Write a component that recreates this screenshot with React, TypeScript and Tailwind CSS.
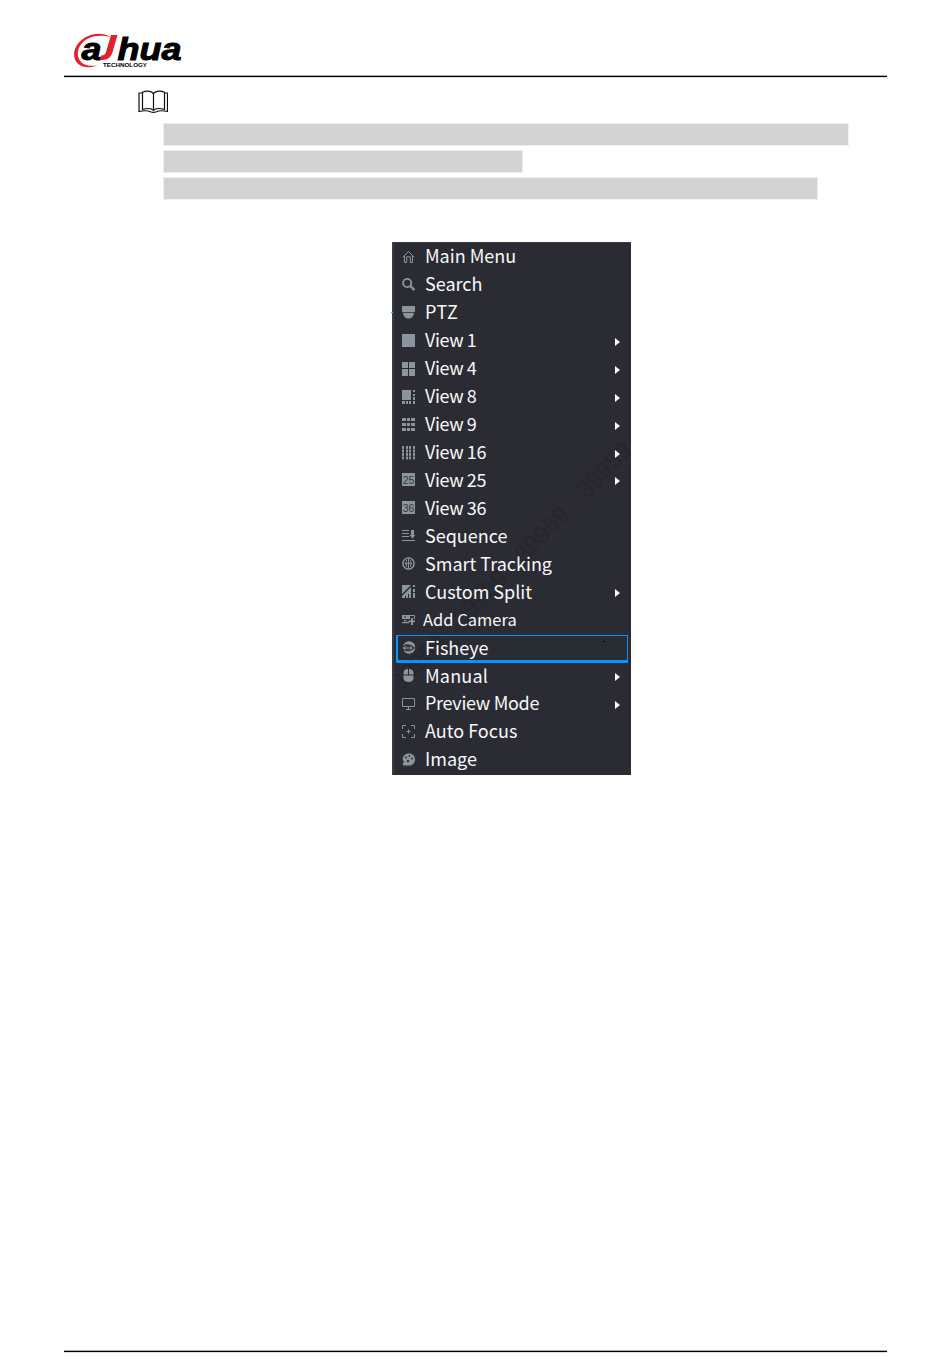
import type { ReactNode } from "react"

interface MenuItem {
  label: string
  icon: ReactNode
  arrow?: boolean
  active?: boolean
  labelClass?: string
}

// cells of a split-view icon, on a 13x13 grid
function Cells({ cells }: { cells: number[][] }) {
  return (
    <>
      {cells.map(([x, y, w, h], i) => (
        <rect key={i} x={x} y={y} width={w} height={h} />
      ))}
    </>
  )
}

const iconText = {
  fontFamily: "Liberation Sans, sans-serif",
  fontSize: 10.5,
  textAnchor: "middle" as const,
  fill: "#34363e",
}

const line = { fill: "none", stroke: "#8b959d" }

const items: MenuItem[] = [
  {
    label: "Main Menu",
    icon: <path {...line} d="M.8 7.2 6.5 1.5l5.700 5.700M2.500 6v6.500h2.200V6.800h3.600v5.700h2.200V6" />,
  },
  {
    label: "Search",
    icon: (
      <g {...line} strokeWidth="1.9">
        <circle cx="5.200" cy="5" r="4.100" />
        <path d="m8.200 7.900 4.200 4.200" strokeWidth="2.400" />
      </g>
    ),
  },
  {
    label: "PTZ",
    labelClass: "tracking-[0.7px]",
    icon: <path d="M0 0h13v5.600l-1 .6H1l-1-.6zM1 7h11c-.4 3.500-2.500 5.500-5.500 5.500S1.400 10.500 1 7z" />,
  },
  { label: "View 1", labelClass: "tracking-[-0.4px]", arrow: true, icon: <Cells cells={[[0, 0, 13, 13]]} /> },
  {
    label: "View 4",
    labelClass: "tracking-[-0.4px]",
    arrow: true,
    icon: <Cells cells={[[0, 0, 6, 6], [7, 0, 6, 6], [0, 7, 6, 7], [7, 7, 6, 7]]} />,
  },
  {
    label: "View 8",
    labelClass: "tracking-[-0.4px]",
    arrow: true,
    icon: (
      <Cells
        cells={[[0, 0, 9, 10], [11, 0, 2, 2], [11, 4, 2, 2], [11, 7, 2, 3], [0, 11, 3, 3], [4, 11, 2, 3], [7, 11, 2, 3], [11, 11, 2, 3]]}
      />
    ),
  },
  {
    label: "View 9",
    labelClass: "tracking-[-0.4px]",
    arrow: true,
    icon: (
      <Cells
        cells={[[0, 0, 4, 3], [5, 0, 3, 3], [9, 0, 4, 3], [0, 5, 4, 3], [5, 5, 3, 3], [9, 5, 4, 3], [0, 10, 4, 3], [5, 10, 3, 3], [9, 10, 4, 3]]}
      />
    ),
  },
  {
    label: "View 16",
    labelClass: "tracking-[-0.4px]",
    arrow: true,
    icon: (
      <Cells
        cells={[0, 4, 7, 11].flatMap((x) => [0, 3.500, 7, 10.500].map((y) => [x, y, 2, 2.900]))}
      />
    ),
  },
  {
    label: "View 25",
    labelClass: "tracking-[-0.4px]",
    arrow: true,
    icon: (
      <>
        <rect width="13" height="13" />
        <text x="6.5" y="10.5" {...iconText}>25</text>
      </>
    ),
  },
  {
    label: "View 36",
    labelClass: "tracking-[-0.4px]",
    icon: (
      <>
        <rect width="13" height="13" />
        <text x="6.5" y="10.5" {...iconText}>36</text>
      </>
    ),
  },
  {
    label: "Sequence",
    icon: <path d="M0 1h7v1H0zM0 4h7v1H0zM0 7h7v1H0zM0 11h13v1H0zM9 1h3v5h1.500L10.500 9.500 7.500 6H9z" />,
  },
  {
    label: "Smart Tracking",
    icon: (
      <g {...line}>
        <circle cx="6.500" cy="6.500" r="5.600" strokeWidth="1.500" />
        <path d="M6.500 2v9M3 6.500h7M4.800 3Q2.500 6.500 4.800 10M8.200 3q2.300 3.500 0 7" />
      </g>
    ),
  },
  {
    label: "Custom Split",
    arrow: true,
    icon: (
      <>
        <path d="M0 0h9L0 9zM0 13v-2L9 2v11H7V9H6v4H4v-2H3v2z" />
        <Cells cells={[[11, 0, 2, 2], [11, 4, 2, 3], [11, 8, 2, 5]]} />
      </>
    ),
  },
  {
    label: "Add Camera",
    labelClass: "-ml-[2px] text-[16.5px]",
    icon: (
      <>
        <path d="M0 2h8v4H0zM0 9h7v1.300H0zM9 5h2v2.500h2v1.700h-2V12H9V9.200H6.500V7.500H9z" />
        <path {...line} d="M8 2.500h4.500V6M2.500 6.500V8H5" />
        <path fill="#2b2b33" d="M2 3.500h2v1H2z" />
      </>
    ),
  },
  {
    label: "Fisheye",
    active: true,
    icon: (
      <>
        <circle cx="7" cy="6.500" r="6.200" />
        <path d="M-.5 7Q5.500 1 12 7 5.500 12.500-.5 7z" fill="#8b959d" stroke="#2b2b33" strokeWidth="1.200" />
        <circle cx="5.800" cy="7" r="1.600" fill="#8b959d" stroke="#2b2b33" strokeWidth="1.100" />
      </>
    ),
  },
  {
    label: "Manual",
    labelClass: "tracking-[0.2px]",
    arrow: true,
    icon: <path d="M6 0v5.500H1.500V4C1.500 1.500 3.500 0 6 0zM7 0c2.500 0 4.500 1.500 4.500 4v1.500H7zM1.500 6.500h10V9c0 2.500-2 4-5 4s-5-1.500-5-4z" />,
  },
  {
    label: "Preview Mode",
    labelClass: "tracking-[-0.3px]",
    arrow: true,
    icon: <path {...line} d="M.5 1.500h12v8H.5zM4 12.500h5M6.500 9.500v3" />,
  },
  {
    label: "Auto Focus",
    icon: <path {...line} d="M.5 4V.5H4M9 .5h3.500V4M.5 9v3.500H4M9 12.500h3.500V9M6.500 4.500v4M4.500 6.500h4" />,
  },
  {
    label: "Image",
    icon: (
      <>
        <path d="M7 .5c3.500 0 6 2.500 6 6s-2.500 6-5.500 6H1.500C0 11.500.5 9 3 9 1 8.500.5 7 .8 5 1.200 2.500 4 .5 7 .5z" />
        <g fill="#2b2b33">
          <circle cx="4" cy="4.500" r="1" />
          <circle cx="7.500" cy="3" r=".9" />
          <circle cx="10" cy="5.500" r=".9" />
          <circle cx="6" cy="8" r="1.200" />
        </g>
      </>
    ),
  },
]

function Logo() {
  return (
    <svg width="112" height="40" viewBox="0 0 112 40" className="block">
      <path
        d="M37 5C31 .5 20 .5 12 5.500 4 10.500.5 17.500 1.200 24 2.200 33.500 13 38.500 25 33c-9 2.500-18.500-.5-20-9C4 17.500 7.500 11 14 7 21 3 30 3 37 5z"
        fill="#e2222b"
      />
      <g fontFamily="Liberation Sans, sans-serif" fontStyle="italic" fontWeight="700" fill="#000" stroke="#000" strokeWidth="1">
        <text x="8.500" y="27.500" fontSize="32" textLength="20" lengthAdjust="spacingAndGlyphs">a</text>
        <text x="44.500" y="27.500" fontSize="32" textLength="64" lengthAdjust="spacingAndGlyphs">hua</text>
      </g>
      <path d="M38 3h6.500l-5 17.500Q37 28 29.500 28H27l1.300-4.500q3.700 0 4.700-3.500z" fill="#e2222b" />
      <text x="30" y="35" fontSize="6" fontFamily="Liberation Sans, sans-serif" fontWeight="700" textLength="44" lengthAdjust="spacingAndGlyphs">
        TECHNOLOGY
      </text>
    </svg>
  )
}

function BookIcon() {
  return (
    <svg width="30" height="24" viewBox="0 0 30 24" fill="none" stroke="#111" strokeWidth="1.2" className="block">
      <path d="M15.500 3.500C13 .5 8 .5 4.500 2.200v17.300c4-1.400 9-1.400 11 .8 2-2.200 7-2.200 11-.8V2.200C23 .5 18 .5 15.500 3.500z" />
      <path d="M15.500 3.500v17M4.500 3H1v18.500c5-1 9-1 11.500.2q3 1.200 6 0C21 20.500 25 20.500 29.500 21.500V3h-3" />
    </svg>
  )
}

function MenuRow({ item }: { item: MenuItem }) {
  return (
    <li className="relative flex h-[27.94px] items-center pl-[10px] pr-[11px]">
      {item.active && (
        <div className="absolute top-[1px] right-[3px] bottom-[-1px] left-[4px] border-t border-r border-b-3 border-l-2 border-[#0098ff]" />
      )}
      <svg width="13" height="14" viewBox="0 0 13 14" fill="#8b959d" className="shrink-0">
        {item.icon}
      </svg>
      <div className="mb-[3px] ml-[10px] flex-1 leading-[24px] whitespace-nowrap">
        <span className={item.labelClass}>{item.label}</span>
      </div>
      {item.arrow && (
        <svg width="5" height="8" viewBox="0 0 5 8" fill="#fff" className="mt-[2px]">
          <path d="M0 0 5 4 0 8z" />
        </svg>
      )}
    </li>
  )
}

export default function App() {
  return (
    <div className="flex h-[1369px] w-[950px] flex-col bg-white pr-[63px] pl-16 font-['Liberation_Sans',sans-serif] text-black">
      <header className="flex h-[76px] items-end pb-[4px] pl-[9px]">
        <Logo />
      </header>
      <div className="h-px bg-black shadow-[0_-1px_0_#aaa,0_1px_0_#ddd]" />

      <main className="flex-1">
        <div className="pt-[13px] pl-[74px]">
          <BookIcon />
        </div>
        <div className="mt-[10px] ml-[100px] flex flex-col gap-[6px]">
          <div className="h-[21px] w-[684px] bg-[#d2d2d2] shadow-[0_0_0_1px_#eee]" />
          <div className="h-[21px] w-[358px] bg-[#d2d2d2] shadow-[0_0_0_1px_#eee]" />
          <div className="h-[21px] w-[653px] bg-[#d2d2d2] shadow-[0_0_0_1px_#eee]" />
        </div>

        <div className="relative mt-[43px] ml-[328px] w-[239px]">
          <div className="relative h-[533px] overflow-hidden border-t border-l-2 border-[#3b3b42] bg-[#2b2b33]">
            {/* faint serial number running across the menu */}
            <div className="absolute top-[305px] left-[-50px] flex h-[36px] w-[334px] -rotate-46 items-center justify-between text-[24px] text-[#26262b]">
              <span>39959</span>
              <span>39959</span>
              <span>39959</span>
              <span>39959</span>
            </div>
            <ul className="relative -ml-[2px] w-[239px] font-['Noto_Sans_CJK_SC',sans-serif] text-[18px] text-[#f8f8f8]">
              {items.map((item) => (
                <MenuRow key={item.label} item={item} />
              ))}
            </ul>
          </div>
          <i className="absolute top-[70px] left-[-1px] h-px w-[2px] bg-[#22d822]" />
          <i className="absolute top-[399px] left-[211px] h-px w-[2px] bg-black" />
        </div>
      </main>

      <div className="h-px bg-black shadow-[0_-1px_0_#aaa,0_1px_0_#ddd]" />
      <footer className="h-[17px]" />
    </div>
  )
}
